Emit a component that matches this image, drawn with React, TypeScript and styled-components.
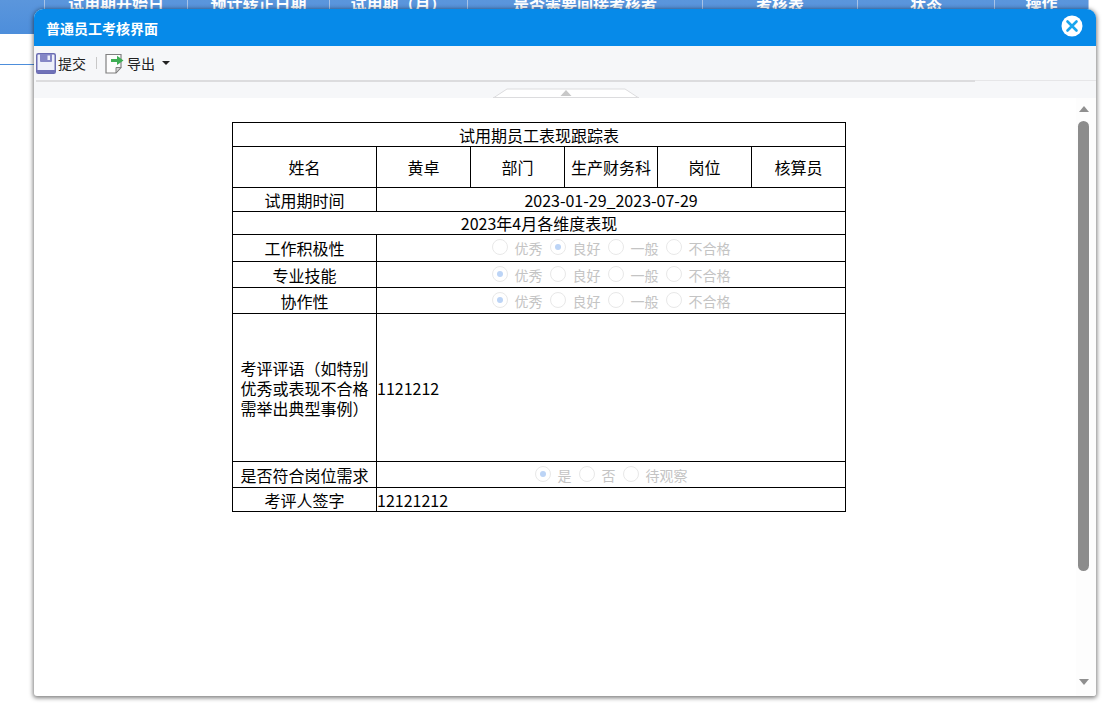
import React from "react";
import styled, { createGlobalStyle } from "styled-components";

const Global = createGlobalStyle`
  html, body { margin: 0; padding: 0; background: #fff; overflow: hidden; }
  body { font-family: "Noto Sans CJK SC", "Liberation Sans", sans-serif; }
`;

const Page = styled.div`
  position: relative;
  width: 1115px;
  height: 713px;
  overflow: hidden;
`;

const HeaderBar = styled.div`
  display: flex;
  width: 1089px;
  height: 34px;
  background: linear-gradient(#5b96dc, #4d8edb);
`;

const HeaderCell = styled.div<{ $w: number }>`
  width: ${(p) => p.$w}px;
  flex: none;
  box-sizing: border-box;
  border-right: 1px solid #a9c4e8;
  color: #fff;
  font-size: 16px;
  font-weight: 700;
  line-height: 6px;
  text-align: center;
  overflow: hidden;
  height: 34px;
  white-space: nowrap;
`;

const BackLine = styled.div`
  width: 36px;
  height: 1px;
  margin-top: 30px;
  background: #4d8edb;
`;

const Window = styled.div`
  position: absolute;
  left: 34px;
  top: 9px;
  width: 1062px;
  height: 687px;
  background: #fff;
  border-radius: 9px 9px 3px 3px;
  box-shadow: 0 1px 4px 1px rgba(0, 0, 0, 0.5);
  display: flex;
  flex-direction: column;
  overflow: hidden;
`;

const TitleBar = styled.div`
  flex: none;
  height: 37px;
  background: #068ae9;
  display: flex;
  align-items: center;
  justify-content: space-between;
  padding: 0 13px 0 12px;
  color: #fff;
  font-size: 14px;
  font-weight: 700;
`;

const Close = styled.svg`
  width: 22px;
  height: 22px;
  margin-top: -3px;
`;

const Toolbar = styled.div`
  flex: none;
  height: 34px;
  background: #f6f7f9;
  display: flex;
  align-items: center;
  padding: 0 0 0 2px;
  color: #222;
  font-size: 14px;
`;

const ToolButton = styled.div`
  display: flex;
  align-items: center;
  gap: 2px;
`;

const ToolSep = styled.div`
  width: 1px;
  height: 12px;
  background: #c8c8c8;
  margin: 0 8px 0 10px;
`;

const Caret = styled.span`
  width: 0;
  height: 0;
  margin-left: 5px;
  border-left: 4px solid transparent;
  border-right: 4px solid transparent;
  border-top: 4px solid #222;
`;

const Splitter = styled.div`
  flex: none;
  height: 18px;
  background: #f6f7f9;
  position: relative;
  display: flex;
  justify-content: center;
  align-items: flex-end;
  padding-right: 1px;
`;

const SplitLine = styled.div`
  position: absolute;
  left: 2px;
  top: 0;
  width: 939px;
  height: 2px;
  background: #dcdcde;
  &::after {
    content: "";
    position: absolute;
    left: 939px;
    top: 0;
    width: 121px;
    height: 1px;
    background: #e6e6e8;
  }
`;

const Handle = styled.svg`
  width: 146px;
  height: 10px;
  display: block;
  margin-left: 2px;
`;

const Body = styled.div`
  flex: 1;
  display: flex;
  min-height: 0;
`;

const Content = styled.div`
  flex: 1;
  padding: 24px 0 0 198px;
`;

const Scrollbar = styled.div`
  flex: none;
  width: 20px;
  background: #fdfdfd;
  position: relative;
  display: flex;
  flex-direction: column;
  align-items: center;
  padding: 8px 5px 0 0;
  box-sizing: border-box;
`;

const ArrowUp = styled.span`
  border-left: 5px solid transparent;
  border-right: 5px solid transparent;
  border-bottom: 6px solid #8f8f8f;
`;

const ArrowDown = styled.span`
  margin-top: 108px;
  border-left: 5px solid transparent;
  border-right: 5px solid transparent;
  border-top: 6px solid #8f8f8f;
`;

const Thumb = styled.div`
  width: 11px;
  height: 450px;
  margin-top: 9px;
  border-radius: 6px;
  background: #8c8c8c;
`;

const Table = styled.table`
  border-collapse: collapse;
  table-layout: fixed;
  width: 614px;
  color: #000;
  font-size: 16px;
  line-height: 20px;
`;

const Row = styled.tr<{ $h: number }>`
  height: ${(p) => p.$h}px;
`;

const Cell = styled.td<{ $left?: boolean }>`
  border: 1px solid #000;
  padding: 0;
  text-align: ${(p) => (p.$left ? "left" : "center")};
  white-space: nowrap;
  overflow: hidden;
`;

const WrapCell = styled(Cell)`
  white-space: normal;
  padding: 0 2px;
`;

const RadioGroup = styled.div`
  display: flex;
  justify-content: center;
  align-items: center;
  gap: 7px;
  color: #c4c4c4;
  font-size: 14px;
`;

const RadioItem = styled.span`
  display: inline-flex;
  align-items: center;
  gap: 7px;
`;

const RadioDot = styled.span<{ $on?: boolean }>`
  width: 16px;
  height: 16px;
  box-sizing: border-box;
  margin-top: -2px;
  border: 1px solid #e8e8e8;
  border-radius: 50%;
  background: #fff;
  display: flex;
  align-items: center;
  justify-content: center;
  &::after {
    content: "";
    width: 6px;
    height: 6px;
    border-radius: 50%;
    background: ${(p) => (p.$on ? "#bcd4f6" : "transparent")};
  }
`;

const Radios = ({ items, on }: { items: string[]; on: number }) => (
  <RadioGroup>
    {items.map((t, i) => (
      <RadioItem key={t}>
        <RadioDot $on={i === on} />
        {t}
      </RadioItem>
    ))}
  </RadioGroup>
);

const Floppy = () => (
  <svg width="20" height="21" viewBox="0 0 20 21">
    <rect x="0.75" y="0.75" width="18.5" height="19.5" rx="1.5" fill="#eef0fa" stroke="#6a6cb2" strokeWidth="1.5" />
    <path d="M4 1h12v7a1 1 0 0 1-1 1H5a1 1 0 0 1-1-1z" fill="#8587c6" />
    <rect x="11.5" y="2.5" width="2.5" height="4.5" fill="#eef0fa" />
    <path d="M1 17h18v3H1z" fill="#7072b8" />
  </svg>
);

const ExportIcon = () => (
  <svg width="20" height="21" viewBox="0 0 20 21">
    <path d="M1 1.5h15v13l-5 5.5H1z" fill="#fdfdfd" stroke="#808080" strokeWidth="1.2" />
    <path d="M16 14.5h-5V20z" fill="#d4d4d4" stroke="#808080" strokeWidth="1" />
    <path d="M6 6h6V2.8L18.5 7.5 12 12V9H6z" fill="#3fae55" />
  </svg>
);

const headers: [string, number][] = [
  ["", 45],
  ["试用期开始日", 143],
  ["预计转正日期", 142],
  ["试用期（月）", 138],
  ["是否需要间接考核者", 235],
  ["考核表", 155],
  ["状态", 137],
  ["操作", 94],
];

const rates = ["优秀", "良好", "一般", "不合格"];

export default function App() {
  return (
    <Page>
      <Global />
      <HeaderBar>
        {headers.map(([t, w], i) => (
          <HeaderCell key={i} $w={w}>
            {t}
          </HeaderCell>
        ))}
      </HeaderBar>
      <BackLine />
      <Window>
        <TitleBar>
          普通员工考核界面
          <Close viewBox="0 0 22 22">
            <circle cx="11" cy="11" r="10.5" fill="#fff" />
            <path d="M6.5 6.5l9 9M15.5 6.5l-9 9" stroke="#18a5ee" strokeWidth="2.6" strokeLinecap="round" />
          </Close>
        </TitleBar>
        <Toolbar>
          <ToolButton>
            <Floppy />
            提交
          </ToolButton>
          <ToolSep />
          <ToolButton>
            <ExportIcon />
            导出
            <Caret />
          </ToolButton>
        </Toolbar>
        <Splitter>
          <SplitLine />
          <Handle viewBox="0 0 146 10">
            <path d="M1 9.5L14 1h118l13 8.5" fill="#fff" stroke="#dcdcde" strokeWidth="1" />
            <path d="M0 9.5h146" stroke="#dcdcde" strokeWidth="1" />
            <path d="M67.5 8l5.5-6 5.5 6z" fill="#c8c8c8" />
          </Handle>
        </Splitter>
        <Body>
          <Content>
            <Table>
              <colgroup>
                <col style={{ width: 144 }} />
                <col style={{ width: 94 }} />
                <col style={{ width: 94 }} />
                <col style={{ width: 93 }} />
                <col style={{ width: 94 }} />
                <col style={{ width: 94 }} />
              </colgroup>
              <tbody>
                <Row $h={24}>
                  <Cell colSpan={6}>试用期员工表现跟踪表</Cell>
                </Row>
                <Row $h={41}>
                  <Cell>姓名</Cell>
                  <Cell>黄卓</Cell>
                  <Cell>部门</Cell>
                  <Cell>生产财务科</Cell>
                  <Cell>岗位</Cell>
                  <Cell>核算员</Cell>
                </Row>
                <Row $h={24}>
                  <Cell>试用期时间</Cell>
                  <Cell colSpan={5}>2023-01-29_2023-07-29</Cell>
                </Row>
                <Row $h={23}>
                  <Cell colSpan={6}>2023年4月各维度表现</Cell>
                </Row>
                <Row $h={27}>
                  <Cell>工作积极性</Cell>
                  <Cell colSpan={5}>
                    <Radios items={rates} on={1} />
                  </Cell>
                </Row>
                <Row $h={26}>
                  <Cell>专业技能</Cell>
                  <Cell colSpan={5}>
                    <Radios items={rates} on={0} />
                  </Cell>
                </Row>
                <Row $h={26}>
                  <Cell>协作性</Cell>
                  <Cell colSpan={5}>
                    <Radios items={rates} on={0} />
                  </Cell>
                </Row>
                <Row $h={148}>
                  <WrapCell>考评评语（如特别优秀或表现不合格需举出典型事例）</WrapCell>
                  <Cell colSpan={5} $left>
                    1121212
                  </Cell>
                </Row>
                <Row $h={26}>
                  <Cell>是否符合岗位需求</Cell>
                  <Cell colSpan={5}>
                    <Radios items={["是", "否", "待观察"]} on={0} />
                  </Cell>
                </Row>
                <Row $h={24}>
                  <Cell>考评人签字</Cell>
                  <Cell colSpan={5} $left>
                    12121212
                  </Cell>
                </Row>
              </tbody>
            </Table>
          </Content>
          <Scrollbar>
            <ArrowUp />
            <Thumb />
            <ArrowDown />
          </Scrollbar>
        </Body>
      </Window>
    </Page>
  );
}
